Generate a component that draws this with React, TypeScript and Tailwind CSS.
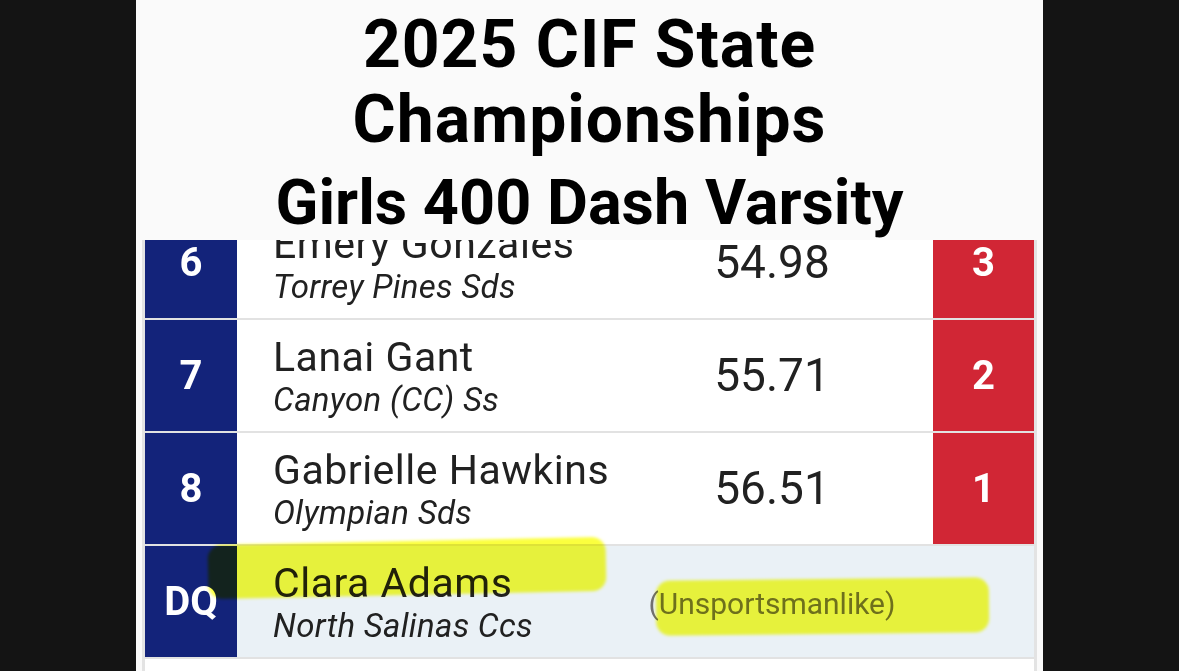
const results = [
  { place: "6", name: "Emery Gonzales", school: "Torrey Pines Sds", mark: "54.98", points: "3" },
  { place: "7", name: "Lanai Gant", school: "Canyon (CC) Ss", mark: "55.71", points: "2" },
  { place: "8", name: "Gabrielle Hawkins", school: "Olympian Sds", mark: "56.51", points: "1" },
];

const Highlight = ({ className }: { className: string }) => (
  <div
    className={`pointer-events-none absolute rounded-[14px] bg-[#fbff3e] mix-blend-multiply blur-[1.5px] ${className}`}
  />
);

export default function App() {
  return (
    <div className="flex h-[671px] w-full justify-center overflow-hidden bg-[#141414] font-['Roboto',sans-serif]">
      <div className="relative flex w-[907px] flex-col bg-[#fafafa]">
        <header className="relative z-10 bg-[#fafafa] pt-[7px] text-center font-bold text-black">
          <h1 className="text-[66px] leading-[75px] tracking-[1px]">
            <span className="block">2025 CIF State</span>
            <span className="block">Championships</span>
          </h1>
          <h2 className="mt-2 text-[63px] leading-[75px]">Girls 400 Dash Varsity</h2>
        </header>

        <div className="mx-[6px] flex-1 overflow-hidden border-x-[3px] border-[#e3e3e3]">
          <div className="-mt-[33px] flex flex-col gap-[2px] bg-[#e2e2e2]">
            {results.map((r) => (
              <div key={r.place} className="flex h-[111px] bg-white">
                <div className="flex w-[92px] items-center justify-center bg-[#13237a] text-[40px] font-bold text-white">
                  {r.place}
                </div>
                <div className="flex flex-1 flex-col justify-center pl-[36px] pt-[3px] text-[#212121]">
                  <div className="text-[41px] leading-[46px] tracking-[0.5px]">{r.name}</div>
                  <div className="text-[33px] italic leading-[40px] tracking-[0.3px]">{r.school}</div>
                </div>
                <div className="flex w-[322px] items-center justify-center text-[46px] text-[#212121]">
                  {r.mark}
                </div>
                <div className="flex w-[101px] items-center justify-center bg-[#d12635] text-[40px] font-bold text-white">
                  {r.points}
                </div>
              </div>
            ))}
            <div className="flex h-[111px] bg-[#eaf1f6]">
              <div className="flex w-[92px] items-center justify-center bg-[#13237a] text-[40px] font-bold text-white">
                DQ
              </div>
              <div className="flex flex-1 flex-col justify-center pl-[36px] pt-[3px] text-[#212121]">
                <div className="text-[41px] leading-[46px] tracking-[0.5px]">Clara Adams</div>
                <div className="text-[33px] italic leading-[40px] tracking-[0.3px]">North Salinas Ccs</div>
              </div>
              <div className="mr-[101px] flex w-[322px] items-center justify-center pt-[4px] text-[30px] text-[#707070]">
                (Unsportsmanlike)
              </div>
            </div>
            <div className="h-[40px] bg-white" />
          </div>
        </div>

        <Highlight className="left-[72px] top-[541px] h-[54px] w-[398px] -rotate-[1.2deg]" />
        <Highlight className="left-[520px] top-[579px] h-[55px] w-[333px] -rotate-[0.6deg]" />
      </div>
    </div>
  );
}
